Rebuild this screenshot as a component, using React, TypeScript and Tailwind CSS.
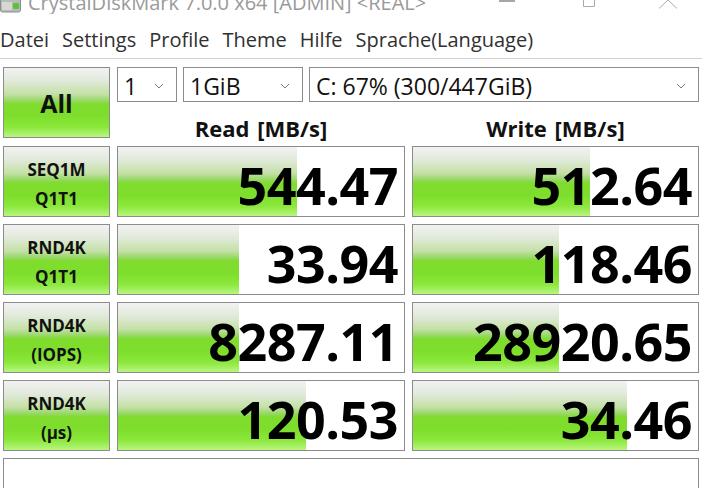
import React from "react";

const GREEN =
  "bg-[linear-gradient(to_bottom,#f2f2f2_0%,#e2eadc_18%,#c4e0a6_38%,#98d868_47%,#80dc2e_52%,#7ede2c_70%,#8ce83c_86%,#b8f680_100%)]";

function Chevron() {
  return (
    <svg width="10" height="6" viewBox="0 0 10 6" className="shrink-0">
      <path d="M1 1 L5 5 L9 1" fill="none" stroke="#7a7a7a" strokeWidth="1" />
    </svg>
  );
}

function Select({ label, w }: { label: string; w: string }) {
  return (
    <div
      className={`${w} h-[35px] border border-[#8c8c8c] bg-white flex items-center justify-between pl-[6px] pr-[12px] pt-[3px] text-[23px] text-[#111] leading-none`}
    >
      <span>{label}</span>
      <Chevron />
    </div>
  );
}

function Label({ l1, l2 }: { l1: string; l2: string }) {
  return (
    <div
      className={`h-[71px] border border-[#8c8c8c] ${GREEN} flex flex-col items-center justify-center gap-[12px] pt-[4px] font-bold text-[17px] leading-none text-[#111]`}
    >
      <span>{l1}</span>
      <span>{l2}</span>
    </div>
  );
}

function Value({ v, fill }: { v: string; fill: number }) {
  return (
    <div className="relative h-[71px] border border-[#8c8c8c] bg-white">
      <div className={`absolute left-0 top-0 bottom-0 ${GREEN}`} style={{ width: fill }} />
      <div className="relative h-full flex items-center justify-end pr-[6px] pt-[6px] font-bold text-[52px] leading-none text-black tracking-[-0.5px]">
        {v}
      </div>
    </div>
  );
}

export default function App() {
  return (
    <div
      className="w-[702px] h-[488px] bg-white overflow-hidden flex flex-col"
      style={{ fontFamily: '"Open Sans", "Noto Sans", sans-serif' }}
    >
      {/* title bar */}
      <div className="h-[14px] overflow-hidden flex items-start shrink-0">
        <svg width="21" height="13" viewBox="0 0 21 13" className="mt-0 shrink-0">
          <rect x="0.5" y="-3" width="20" height="15" rx="2" fill="#b8bcb8" stroke="#8a8e8a" />
          <rect x="2" y="2" width="10" height="8" fill="#d6d8d6" />
          <rect x="13" y="3" width="6" height="6" rx="1" fill="#5cc23a" />
        </svg>
        <span className="ml-[7px] -mt-[11px] text-[20px] leading-[28px] text-[#9a9a9a] whitespace-nowrap">
          CrystalDiskMark 7.0.0 x64 [ADMIN] &lt;REAL&gt;
        </span>
        <div className="ml-auto flex items-start shrink-0">
          <svg width="16" height="4" viewBox="0 0 16 4">
            <line x1="0" y1="1" x2="16" y2="1" stroke="#888" strokeWidth="1.5" />
          </svg>
          <svg width="12" height="8" viewBox="0 0 12 8" className="ml-[68px]">
            <path d="M0.5 0 V6.5 H11.5 V0" fill="none" stroke="#aaa" strokeWidth="1" />
          </svg>
          <svg width="20" height="9" viewBox="0 0 20 9" className="ml-[63px] mr-[24px]">
            <path d="M10 0 L1 8.5 M10 0 L19 8.5" fill="none" stroke="#aaa" strokeWidth="1" />
          </svg>
        </div>
      </div>

      {/* menu bar */}
      <div className="h-[45px] shrink-0 border-b border-[#d0d0d0] flex items-center gap-[13px] pl-0 pt-[7px] text-[20px] text-[#303030] leading-none">
        <span>Datei</span>
        <span>Settings</span>
        <span>Profile</span>
        <span>Theme</span>
        <span>Hilfe</span>
        <span>Sprache(Language)</span>
      </div>

      {/* main */}
      <div className="px-[3px] pt-[8px] grid grid-cols-[107px_288px_287px] gap-x-[7px] gap-y-[7px]">
        <div
          className={`h-[71px] border border-[#8c8c8c] ${GREEN} flex items-center justify-center font-bold text-[25px] text-[#111] pt-[2px]`}
        >
          All
        </div>
        <div className="col-span-2 flex flex-col">
          <div className="flex gap-[6px]">
            <Select label="1" w="w-[60px]" />
            <Select label="1GiB" w="w-[120px]" />
            <Select label="C: 67% (300/447GiB)" w="flex-1" />
          </div>
          <div className="flex-1 grid grid-cols-[288px_287px] gap-x-[7px]">
            <div className="flex items-center justify-center font-bold text-[22px] leading-none text-[#111] pt-[15px] [word-spacing:2px]">
              Read [MB/s]
            </div>
            <div className="flex items-center justify-center font-bold text-[22px] leading-none text-[#111] pt-[15px] [word-spacing:2px]">
              Write [MB/s]
            </div>
          </div>
        </div>

        <Label l1="SEQ1M" l2="Q1T1" />
        <Value v="544.47" fill={179} />
        <Value v="512.64" fill={177} />

        <Label l1="RND4K" l2="Q1T1" />
        <Value v="33.94" fill={121} />
        <Value v="118.46" fill={146} />

        <Label l1="RND4K" l2="(IOPS)" />
        <Value v="8287.11" fill={121} />
        <Value v="28920.65" fill={146} />

        <Label l1="RND4K" l2="(µs)" />
        <Value v="120.53" fill={188} />
        <Value v="34.46" fill={214} />

        <div className="col-span-3 h-[60px] border border-[#8c8c8c] bg-white" />
      </div>
    </div>
  );
}
